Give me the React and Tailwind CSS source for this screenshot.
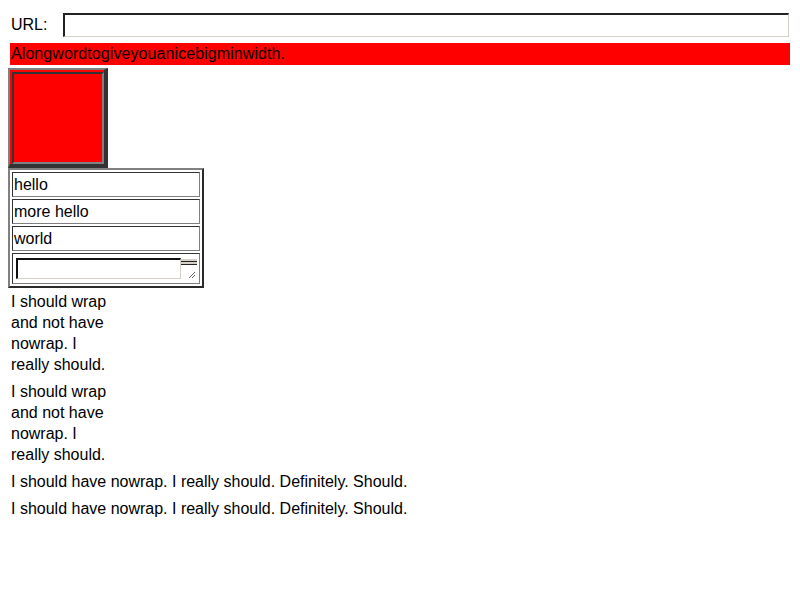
import React from "react";

function Cell({ children }) {
  return (
    <div className="border border-t-[#333] border-l-[#333] border-b-[#808080] border-r-[#808080] bg-white py-[1px] pl-[1px] leading-[21px] h-[25px]">
      {children}
    </div>
  );
}

export default function App() {
  return (
    <div className="w-[800px] h-[600px] bg-white text-black text-[16px] font-['Liberation_Sans',Arial,sans-serif] leading-[21px] overflow-hidden">
      {/* URL row */}
      <div className="flex pt-[13px] pl-[11px] pr-[11px]">
        <div className="w-[52px] leading-[24px]">URL:</div>
        <div className="flex-1 h-[24px] bg-white border-t-2 border-l-2 border-t-[#222] border-l-[#222] border-b border-r border-b-[#d4d0c8] border-r-[#d4d0c8]" />
      </div>

      {/* Red bar */}
      <div className="mt-[6px] mx-[10px] h-[22px] bg-[#ff0000] pl-[1px] leading-[22px] whitespace-nowrap tracking-[0.08px]">
        Alongwordtogiveyouanicebigminwidth.
      </div>

      {/* Red square */}
      <div className="mt-[3px] ml-[8px] w-[100px] h-[100px] bg-[#ff0000] border-t-2 border-l-2 border-t-[#808080] border-l-[#808080] border-r-4 border-b-4 border-r-[#333] border-b-[#333] pt-[2px] pl-[2px]">
        <div className="w-[92px] h-[92px] bg-[#ff0000] border-2 border-t-[#333] border-l-[#333] border-b-[#808080] border-r-[#808080]" />
      </div>

      {/* Second table */}
      <div className="ml-[8px] w-[196px] h-[120px] border-t-2 border-l-2 border-t-[#808080] border-l-[#808080] border-r-2 border-b-2 border-r-[#2b2b2b] border-b-[#2b2b2b] p-[2px] flex flex-col gap-[2px]">
        <Cell>hello</Cell>
        <Cell>more hello</Cell>
        <Cell>world</Cell>
        <div className="flex-1 border border-t-[#333] border-l-[#333] border-b-[#808080] border-r-[#808080] bg-white pt-[4px] pl-[3px]">
          <div className="flex w-[181px] h-[22px]">
            <div className="w-[165px] h-[21px] bg-white border-t-2 border-l-2 border-t-[#111] border-l-[#111] border-b border-r border-b-[#d4d0c8] border-r-[#d4d0c8]" />
            <div className="relative w-[16px] h-[21px]">
              <div className="absolute left-0 top-[1px] w-[16px] h-[2px] bg-[#d4d0c8]" />
              <div className="absolute left-0 top-[3px] w-[16px] h-[1px] bg-[#222]" />
              <div className="absolute left-0 top-[4px] w-[16px] h-[2px] bg-[#d4d0c8]" />
              <div className="absolute left-0 top-[6px] w-[16px] h-[1px] bg-[#222]" />
              <svg className="absolute left-[7px] top-[13px]" width="8" height="8" viewBox="0 0 8 8">
                <path d="M7 1 L1 7 M7 4 L4 7" stroke="#666" strokeWidth="1" fill="none" />
              </svg>
            </div>
          </div>
        </div>
      </div>

      {/* Paragraphs */}
      <div className="pl-[11px]">
        <div className="w-[100px] py-[3px]">I should wrap and not have nowrap. I really should.</div>
        <div className="w-[100px] py-[3px]">I should wrap and not have nowrap. I really should.</div>
        <div className="py-[3px] whitespace-nowrap">I should have nowrap. I really should. Definitely. Should.</div>
        <div className="py-[3px] whitespace-nowrap">I should have nowrap. I really should. Definitely. Should.</div>
      </div>
    </div>
  );
}
